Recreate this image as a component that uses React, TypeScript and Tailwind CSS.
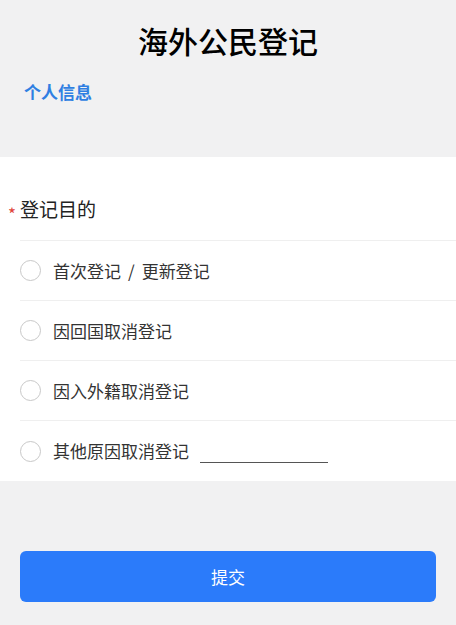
import { useState } from "react";

const options = ["首次登记 / 更新登记", "因回国取消登记", "因入外籍取消登记", "其他原因取消登记"];

export default function App() {
  const [selected, setSelected] = useState<number | null>(null);
  const [other, setOther] = useState("");

  return (
    <div className="min-h-[625px] bg-[#f1f1f2] font-['Noto_Sans_CJK_SC','Noto_Sans',sans-serif]">
      <div className="h-[157px] flex flex-col">
        <h1 className="pt-[20px] h-[40px] box-content text-center text-[30px] leading-[40px] font-medium text-black">
          海外公民登记
        </h1>
        <div className="pl-[24px] mt-[20px] text-[17px] leading-[24px] font-bold text-[#2f7fe2]">个人信息</div>
      </div>

      <div className="bg-white">
        <div className="flex items-center h-[83px] pt-[21px] pl-[8px]">
          <span className="w-[12px] h-[28px] pt-[5px] text-[17px] leading-[28px] text-[#e0443a]">*</span>
          <span className="text-[19px] leading-[28px] text-[#222]">登记目的</span>
        </div>
        <div className="pl-[20px]">
          {options.map((o, i) => {
            const parts = o.split(" / ");
            return (
              <div
                key={o}
                onClick={() => setSelected(i)}
                className={`flex items-center border-t border-[#efefef] ${i === 3 ? "h-[61px]" : "h-[60px]"}`}
              >
                <span
                  className={`w-[21px] h-[21px] rounded-full border flex items-center justify-center ${
                    selected === i ? "border-[#2b7bfa]" : "border-[#c8c8c8]"
                  }`}
                >
                  {selected === i && <span className="w-[11px] h-[11px] rounded-full bg-[#2b7bfa]" />}
                </span>
                <span className="ml-[12px] text-[17px] leading-[24px] text-[#333]">
                  {parts[0]}
                  {parts[1] && (
                    <>
                      <span className="mx-[7px]">/</span>
                      {parts[1]}
                    </>
                  )}
                </span>
                {i === 3 && (
                  <input
                    value={other}
                    onChange={(e) => setOther(e.target.value)}
                    className="ml-[11px] w-[128px] h-[24px] border-b border-[#555] outline-none text-[15px] text-[#333]"
                  />
                )}
              </div>
            );
          })}
        </div>
      </div>

      <div className="px-[20px] pt-[70px] pb-[23px]">
        <button className="w-full h-[51px] rounded-[6px] bg-[#2b7bfa] text-white text-[17px]">提交</button>
      </div>
    </div>
  );
}
